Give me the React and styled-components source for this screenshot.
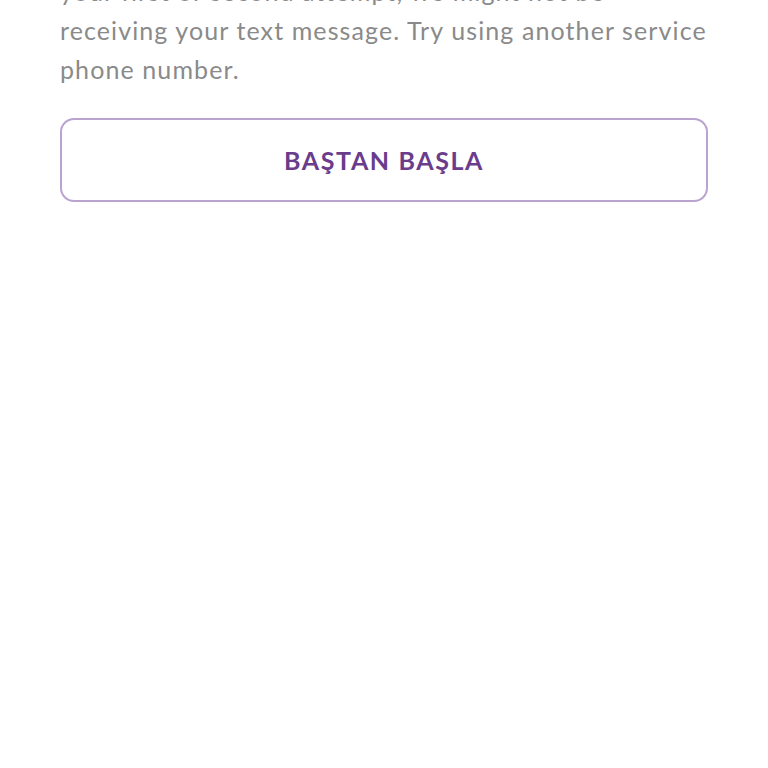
import React from "react";
import styled, { createGlobalStyle } from "styled-components";

const GlobalStyle = createGlobalStyle`
  html, body {
    margin: 0;
    padding: 0;
    background: #ffffff;
    overflow: hidden;
  }
  body {
    font-family: "Lato", "Noto Sans", sans-serif;
  }
`;

const Page = styled.div`
  width: 768px;
  height: 768px;
  padding: 0 60px;
  box-sizing: border-box;
  display: flex;
  flex-direction: column;
  gap: 29px;
`;

const Message = styled.p`
  margin: -28px 0 0 0;
  font-size: 25px;
  line-height: 39px;
  color: #8a8a8a;
  letter-spacing: 1.1px;
  white-space: nowrap;
`;

const OutlineButton = styled.button`
  width: 100%;
  height: 84px;
  flex-shrink: 0;
  border: 2px solid #bba3cf;
  border-radius: 14px;
  background: #fff;
  color: #6a3d8c;
  font-family: "Lato", "Noto Sans", sans-serif;
  font-size: 25px;
  font-weight: 700;
  letter-spacing: 1.6px;
  cursor: pointer;
`;

export default function App() {
  return (
    <>
      <GlobalStyle />
      <Page>
        <Message>
          your first or second attempt, we might not be
          <br />
          receiving your text message. Try using another service
          <br />
          phone number.
        </Message>
        <OutlineButton type="button">BAŞTAN BAŞLA</OutlineButton>
      </Page>
    </>
  );
}
